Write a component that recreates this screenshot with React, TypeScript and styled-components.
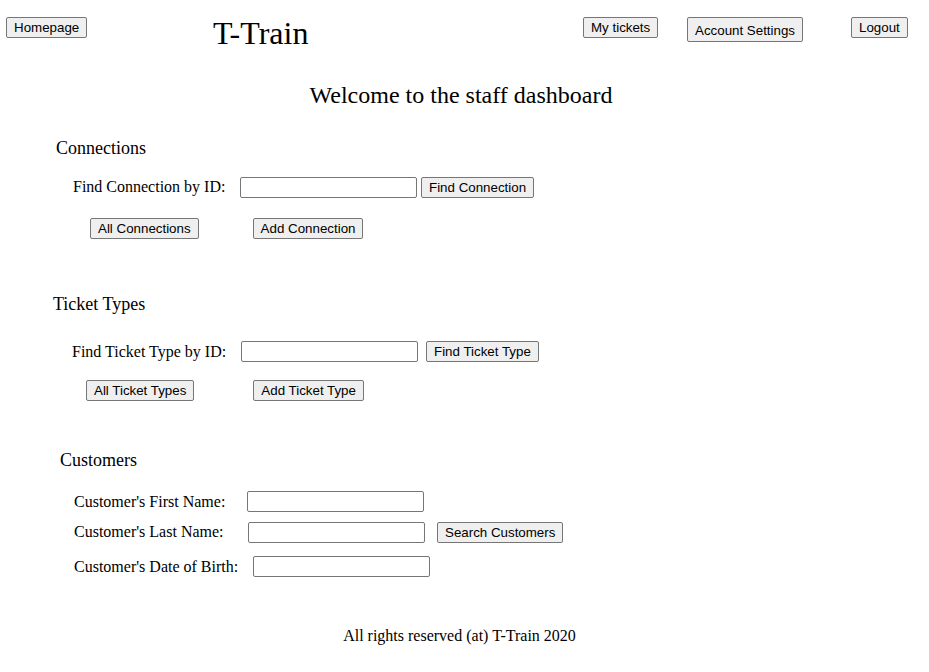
import styled, { createGlobalStyle } from "styled-components";

const GlobalStyle = createGlobalStyle`
  html, body {
    margin: 0;
    padding: 0;
    background: #ffffff;
  }
  body {
    font-family: "Liberation Serif", "Times New Roman", serif;
    color: #000000;
  }
`;

const App = () => {
    return (
        <Page>
            <GlobalStyle />
            <Header>
                <div>
                    <Button>Homepage</Button>
                </div>
                <Title>T-Train</Title>
                <div>
                    <Button>My tickets</Button>
                </div>
                <div>
                    <Button $tall>Account Settings</Button>
                </div>
                <div>
                    <Button>Logout</Button>
                </div>
            </Header>

            <Welcome>Welcome to the staff dashboard</Welcome>

            <SectionTitle $top={28} $left={56}>Connections</SectionTitle>
            <Row $top={17} $left={73} $h={22}>
                <Label $w={167}>Find Connection by ID:</Label>
                <TextInput />
                <Button $ml={4}>Find Connection</Button>
            </Row>
            <Row $top={19} $left={90} $h={22}>
                <Button>All Connections</Button>
                <Button $ml={54}>Add Connection</Button>
            </Row>

            <SectionTitle $top={54} $left={53}>Ticket Types</SectionTitle>
            <Row $top={25} $left={72} $h={23}>
                <Label $w={169}>Find Ticket Type by ID:</Label>
                <TextInput />
                <Button $ml={8}>Find Ticket Type</Button>
            </Row>
            <Row $top={16} $left={86} $h={22}>
                <Button>All Ticket Types</Button>
                <Button $ml={59}>Add Ticket Type</Button>
            </Row>

            <SectionTitle $top={48} $left={60}>Customers</SectionTitle>
            <Row $top={20} $left={74} $h={21}>
                <Label $w={173}>Customer's First Name:</Label>
                <TextInput />
            </Row>
            <Row $top={8} $left={74} $h={24}>
                <Label $w={174}>Customer's Last Name:</Label>
                <TextInput />
                <Button $ml={12}>Search Customers</Button>
            </Row>
            <Row $top={12} $left={74} $h={21}>
                <Label $w={179}>Customer's Date of Birth:</Label>
                <TextInput />
            </Row>

            <Footer>All rights reserved (at) T-Train 2020</Footer>
        </Page>
    );
};

export default App;

const Page = styled.div`
    width: 929px;
    min-height: 672px;
    display: flex;
    flex-direction: column;
`;

const Header = styled.header`
    height: 45px;
    box-sizing: border-box;
    padding: 17px 0 0 6px;
    display: grid;
    grid-template-columns: 207px 370px 104px 164px auto;
    align-items: start;
`;

const Title = styled.h1`
    margin: 0;
    font-size: 32px;
    line-height: 32px;
    font-weight: normal;
`;

const Button = styled.button<{ $tall?: boolean; $ml?: number }>`
    height: ${({ $tall }) => ($tall ? 25 : 21)}px;
    box-sizing: border-box;
    margin: 0 0 0 ${({ $ml }) => $ml ?? 0}px;
    padding: ${({ $tall }) => ($tall ? "2px 7px 0" : "0 7px")};
    border: 1px solid #767676;
    border-radius: 2px;
    background: #efefef;
    color: #000000;
    font-family: "Liberation Sans", Arial, sans-serif;
    font-size: 13.333px;
    line-height: 15px;
    white-space: nowrap;
`;

const Welcome = styled.h2`
    margin: 36px 0 0;
    padding-right: 7px;
    font-size: 24px;
    line-height: 28px;
    font-weight: normal;
    text-align: center;
`;

const SectionTitle = styled.h3<{ $top: number; $left: number }>`
    margin: ${({ $top }) => $top}px 0 0 ${({ $left }) => $left}px;
    font-size: 18px;
    line-height: 22px;
    font-weight: normal;
`;

const Row = styled.div<{ $top: number; $left: number; $h: number }>`
    display: flex;
    align-items: center;
    height: ${({ $h }) => $h}px;
    margin-top: ${({ $top }) => $top}px;
    padding-left: ${({ $left }) => $left}px;
`;

const Label = styled.span<{ $w: number }>`
    width: ${({ $w }) => $w}px;
    flex-shrink: 0;
    font-size: 16px;
    line-height: 18px;
    white-space: nowrap;
`;

const TextInput = styled.input.attrs({ type: "text" })`
    width: 177px;
    height: 21px;
    box-sizing: border-box;
    margin: 0;
    padding: 1px 2px;
    border: 1px solid #767676;
    border-radius: 2px;
    background: #ffffff;
    font-family: "Liberation Sans", Arial, sans-serif;
    font-size: 13.333px;
`;

const Footer = styled.footer`
    margin-top: 50px;
    padding-right: 10px;
    font-size: 16px;
    line-height: 18px;
    text-align: center;
`;
